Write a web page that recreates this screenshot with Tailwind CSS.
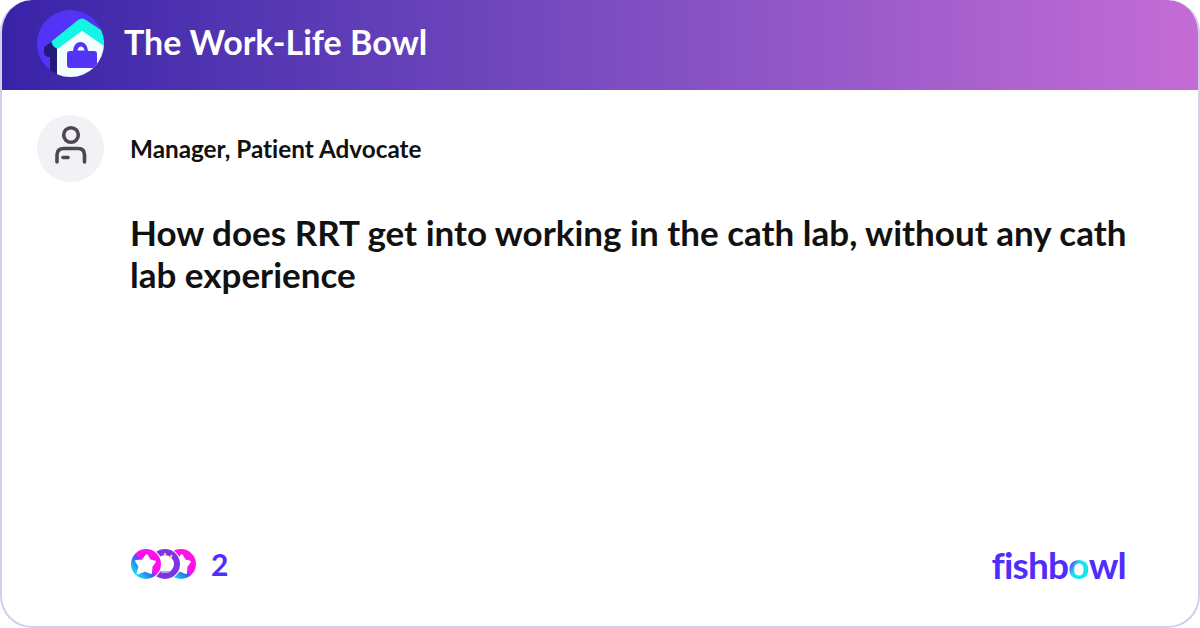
<!DOCTYPE html>
<html>
<head>
<meta charset="utf-8">
<script src="https://cdn.jsdelivr.net/npm/@tailwindcss/browser@4"></script>
</head>
<body class="m-0 bg-white">
<div class="w-[1200px] h-[628px] flex flex-col overflow-hidden rounded-[32px] border-2 border-t-0 border-[#d3cfe9] bg-white font-['Lato',sans-serif] box-border [font-variant-ligatures:none]">
  <header class="-mx-[2px] h-[90px] shrink-0 flex items-center pl-[37px] pb-[3px] gap-[20px] bg-gradient-to-r from-[#3922a8] to-[#c56cd6] rounded-t-[32px]">
    <svg width="67" height="67" viewBox="0 0 67 67" class="shrink-0">
      <defs><clipPath id="c"><circle cx="33.5" cy="33.5" r="33.5"/></clipPath></defs>
      <circle cx="33.5" cy="33.5" r="33.5" fill="#5333f6"/>
      <g clip-path="url(#c)">
        <path d="M7 37 L13 33 H21 V70 H13 V47 Q7 47 7 42Z" fill="#241a78"/>
        <path d="M20 32 L45 18 L70 32 V70 H20Z" fill="#f2fdff"/>
        <path d="M15 31 L41 10 Q45 7 49 10 L70 24 V38 L45 20.7 L20.5 39 Q14 36 15 31Z" fill="#14f5e4"/>
        <path d="M30 44 Q30 41 33 41 H36 C37 29 50 29 51 41 H57 Q60 41 60 44 V55 Q60 58 57 58 H33 Q30 58 30 55Z" fill="#5333f6"/>
        <path d="M40.5 40.5 C41 35 47 35 47.5 40.5Z" fill="#f2fdff"/>
      </g>
    </svg>
    <span class="text-white text-[34px] font-bold leading-none pb-[3px]">The Work-Life Bowl</span>
  </header>
  <main class="flex-1 flex flex-col pl-[35px] pr-[72px] pt-[25px] pb-[42px]">
    <div class="flex items-center gap-[26px]">
      <div class="w-[67px] h-[67px] rounded-full bg-[#f1f1f6] shrink-0">
        <svg width="67" height="67" viewBox="0 0 67 67" fill="none" stroke="#4d4754" stroke-width="3.6" stroke-linecap="round">
          <circle cx="34" cy="20" r="7.3"/>
          <path d="M20 47 V40 Q20 33.5 27 33.5 H41 Q47.5 33.5 47.5 40 V47"/>
          <path d="M26 42.5 H31"/>
        </svg>
      </div>
      <span class="text-[24.3px] font-bold text-[#111] leading-none pt-[2px]">Manager, Patient Advocate</span>
    </div>
    <h1 class="mt-[29px] ml-[93px] -mr-[10px] text-[35px] font-bold leading-[42px] text-[#111]">How does RRT get into working in the cath lab, without any cath lab experience</h1>
    <div class="mt-auto ml-[93px] flex items-center justify-between h-[40px]">
      <div class="flex items-center gap-[14px]">
        <div class="flex items-center">
          <svg width="32" height="32" viewBox="0 0 32 32" class="relative z-30 shrink-0">
            <defs><linearGradient id="g1" x1="0.1" y1="0.9" x2="0.9" y2="0.1"><stop offset=".1" stop-color="#12d4ee"/><stop offset=".42" stop-color="#3b5cf5"/><stop offset=".52" stop-color="#ff10e8"/></linearGradient></defs>
            <circle cx="16" cy="16" r="16" fill="#fff"/>
            <circle cx="16" cy="16" r="15" fill="url(#g1)"/>
            <path d="M16.7 7 L20 12.5 L25 13.7 L21.5 18.5 L21 25 L15 22.5 L7.5 25.5 L9.5 18.5 L6 13 L12.5 12.5Z" fill="#fff" stroke="#fff" stroke-width="2" stroke-linejoin="round"/>
          </svg>
          <svg width="32" height="32" viewBox="0 0 32 32" class="relative z-20 -ml-[13px] shrink-0">
            <circle cx="16" cy="16" r="16" fill="#fff"/>
            <circle cx="16" cy="16" r="15" fill="#7a35e8"/>
            <circle cx="16" cy="16" r="9" fill="#fff"/>
            <path d="M10 23 H22 L19 25 H13Z" fill="#b7a8d8"/>
            <path d="M9 7 L11 10 M16 5 V8 M23 7 L21 10" stroke="#ffd84d" stroke-width="2"/>
          </svg>
          <svg width="32" height="32" viewBox="0 0 32 32" class="relative z-10 -ml-[16px] shrink-0">
            <circle cx="16" cy="16" r="15" fill="url(#g1)"/>
            <path d="M16.7 7 L20 12.5 L25 13.7 L21.5 18.5 L21 25 L15 22.5 L7.5 25.5 L9.5 18.5 L6 13 L12.5 12.5Z" fill="#fff" stroke="#fff" stroke-width="2" stroke-linejoin="round"/>
          </svg>
        </div>
        <span class="text-[30px] font-bold text-[#4f2dfb] leading-none">2</span>
      </div>
      <div class="text-[37px] font-bold text-[#4f2dfb] leading-none tracking-[-0.8px] flex items-center">fishb<span class="bg-gradient-to-br from-[#4f2dfb] from-30% to-[#12e8ee] to-50% bg-clip-text text-transparent">o</span>wl</div>
    </div>
  </main>
</div>
</body>
</html>
